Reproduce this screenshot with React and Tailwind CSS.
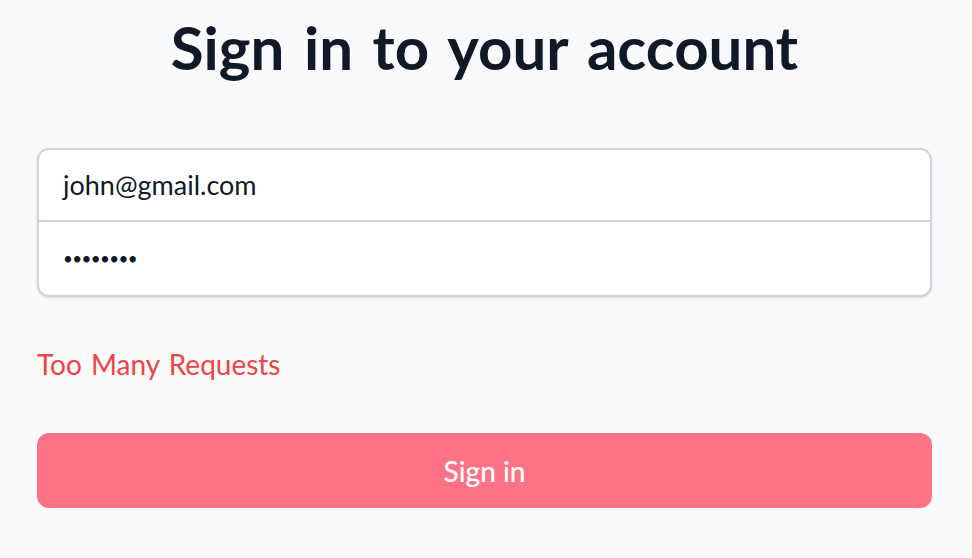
export default function App() {
  return (
    <div className="min-h-[558px] bg-[#f9fafb] pl-[37px] pr-[40px] font-['Lato','Noto_Sans',sans-serif]">
      <h1 className="pt-[13px] text-center text-[60px] font-bold leading-[68px] text-[#111827] [word-spacing:5px]">
        Sign in to your account
      </h1>
      <div className="mt-[67px] rounded-[12px] border-2 border-[#d1d5db] bg-white shadow-sm">
        <div className="flex h-[72px] items-center border-b-2 border-[#d1d5db] px-[24px] text-[27px] text-[#111827]">
          john@gmail.com
        </div>
        <div className="flex h-[73px] items-center px-[24px] text-[#111827]">
          <span className="text-[17px] tracking-[-0.6px]">••••••••</span>
        </div>
      </div>
      <div className="mt-[47px] text-[28px] leading-[40px] text-[#ef4444] [word-spacing:2px]">
        Too Many Requests
      </div>
      <button className="mt-[49px] flex h-[75px] w-full items-center justify-center rounded-[12px] bg-[#fe7286] text-[28px] font-medium text-white">
        Sign in
      </button>
    </div>
  );
}
